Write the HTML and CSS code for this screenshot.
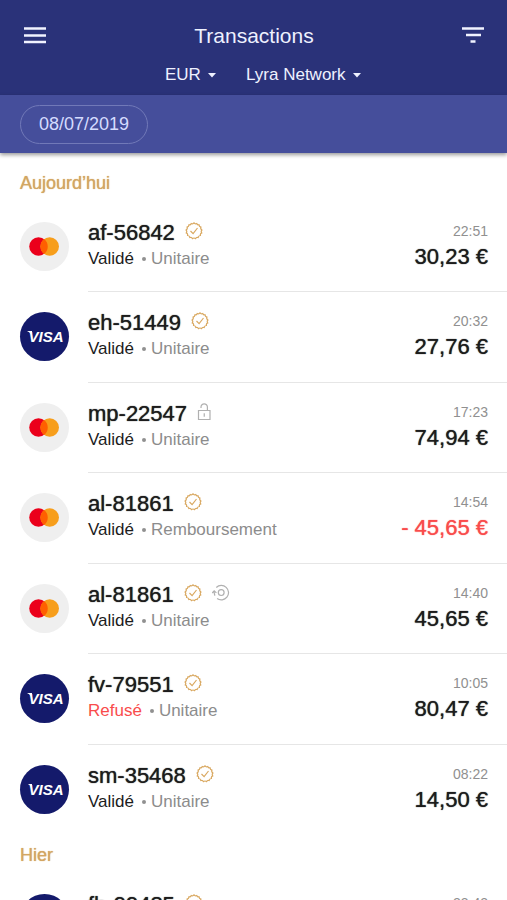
FILE: index.html
```
<!DOCTYPE html>
<html lang="fr">
<head>
<meta charset="utf-8">
<meta name="viewport" content="width=device-width, initial-scale=1">
<title>Transactions</title>
<link rel="stylesheet" href="styles.css">
</head>
<body>
<svg class="defs" aria-hidden="true">
  <symbol id="mastercard" viewBox="0 0 49 49">
    <circle cx="24.500" cy="24.500" r="24.500" fill="#efefef"/>
    <circle cx="18.500" cy="24.500" r="9.300" fill="#eb001b"/>
    <circle cx="29.700" cy="24.500" r="9.300" fill="#f79e1b"/>
    <path d="M24.100 17.100a9.300 9.300 0 0 1 0 14.800a9.300 9.300 0 0 1 0-14.800z" fill="#ff5f00"/>
  </symbol>
  <symbol id="seal" viewBox="0 0 18 18">
    <path d="M9 .9Q10 2.300 11.700 1.500Q12.300 3.200 14.100 2.900Q14.100 4.700 15.900 5.200Q15.200 6.900 16.900 8Q15.700 9.300 16.700 10.900Q15 11.600 15.400 13.500Q13.500 13.500 13.200 15.500Q11.500 14.800 10.400 16.600Q9 15.400 7.600 16.600Q6.500 14.800 4.800 15.500Q4.500 13.500 2.600 13.500Q3 11.600 1.300 10.900Q2.300 9.300 1.100 8Q2.800 6.900 2.100 5.200Q3.900 4.700 3.900 2.900Q5.700 3.200 6.300 1.500Q8 2.300 9 .9Z"/>
    <path d="M5.500 9l2.600 2.600 4.400-5.600"/>
  </symbol>
  <symbol id="lock" viewBox="0 0 18 18">
    <path d="M1.500 7.500h11.500v9h-11.500zM4 5V4a3.200 3.200 0 0 1 6.400 0v3.500M7.250 10.200v3.600"/>
  </symbol>
  <symbol id="refund" viewBox="0 0 18 18">
    <circle cx="9.200" cy="8.600" r="2.900"/>
    <path d="M4.300 3.500a7.200 7.200 0 1 1 .8 11M.2 9l2-2.200 2.200 2.100M2.200 7v1.700a7 7 0 0 0 .8 2.900"/>
  </symbol>
  <symbol id="caret" viewBox="0 0 8 5"><path d="M0 0h8L4 4.500z"/></symbol>
</svg>

<header class="app-bar">
  <div class="title-row">
    <button class="icon-button" type="button" aria-label="Menu">
      <svg viewBox="0 0 24 24"><path d="M1 4.500h22M1 11.500h22M1 18h22"/></svg>
    </button>
    <h1>Transactions</h1>
    <button class="icon-button" type="button" aria-label="Filtrer">
      <svg viewBox="0 0 24 24"><path d="M1 4.500h22M5 11h15M9.500 17.500h5"/></svg>
    </button>
  </div>
  <div class="select-row">
    <label class="picker">
      <select aria-label="Devise"><option>EUR</option></select>
      <svg class="caret"><use href="#caret"/></svg>
    </label>
    <label class="picker">
      <select aria-label="Société"><option>Lyra Network</option></select>
      <svg class="caret"><use href="#caret"/></svg>
    </label>
  </div>
</header>
<div class="date-bar">
  <button class="chip" type="button">08/07/2019</button>
</div>

<main>
  <h2>Aujourd’hui</h2>
  <ul class="list">
    <li>
      <svg class="brand" role="img" aria-label="Mastercard"><use href="#mastercard"/></svg>
      <div class="row">
        <div class="info">
          <div class="ref"><span>af-56842</span><svg class="badge"><use href="#seal"/></svg></div>
          <div class="meta"><span class="status">Validé</span><span class="kind">Unitaire</span></div>
        </div>
        <div class="figures"><time>22:51</time><span class="amount">30,23 €</span></div>
      </div>
    </li>
    <li>
      <span class="brand visa">VISA</span>
      <div class="row">
        <div class="info">
          <div class="ref"><span>eh-51449</span><svg class="badge"><use href="#seal"/></svg></div>
          <div class="meta"><span class="status">Validé</span><span class="kind">Unitaire</span></div>
        </div>
        <div class="figures"><time>20:32</time><span class="amount">27,76 €</span></div>
      </div>
    </li>
    <li>
      <svg class="brand" role="img" aria-label="Mastercard"><use href="#mastercard"/></svg>
      <div class="row">
        <div class="info">
          <div class="ref"><span>mp-22547</span><svg class="badge muted"><use href="#lock"/></svg></div>
          <div class="meta"><span class="status">Validé</span><span class="kind">Unitaire</span></div>
        </div>
        <div class="figures"><time>17:23</time><span class="amount">74,94 €</span></div>
      </div>
    </li>
    <li>
      <svg class="brand" role="img" aria-label="Mastercard"><use href="#mastercard"/></svg>
      <div class="row">
        <div class="info">
          <div class="ref"><span>al-81861</span><svg class="badge"><use href="#seal"/></svg></div>
          <div class="meta"><span class="status">Validé</span><span class="kind">Remboursement</span></div>
        </div>
        <div class="figures"><time>14:54</time><span class="amount negative">- 45,65 €</span></div>
      </div>
    </li>
    <li>
      <svg class="brand" role="img" aria-label="Mastercard"><use href="#mastercard"/></svg>
      <div class="row">
        <div class="info">
          <div class="ref"><span>al-81861</span><svg class="badge"><use href="#seal"/></svg><svg class="badge muted"><use href="#refund"/></svg></div>
          <div class="meta"><span class="status">Validé</span><span class="kind">Unitaire</span></div>
        </div>
        <div class="figures"><time>14:40</time><span class="amount">45,65 €</span></div>
      </div>
    </li>
    <li>
      <span class="brand visa">VISA</span>
      <div class="row">
        <div class="info">
          <div class="ref"><span>fv-79551</span><svg class="badge"><use href="#seal"/></svg></div>
          <div class="meta"><span class="status negative">Refusé</span><span class="kind">Unitaire</span></div>
        </div>
        <div class="figures"><time>10:05</time><span class="amount">80,47 €</span></div>
      </div>
    </li>
    <li>
      <span class="brand visa">VISA</span>
      <div class="row">
        <div class="info">
          <div class="ref"><span>sm-35468</span><svg class="badge"><use href="#seal"/></svg></div>
          <div class="meta"><span class="status">Validé</span><span class="kind">Unitaire</span></div>
        </div>
        <div class="figures"><time>08:22</time><span class="amount">14,50 €</span></div>
      </div>
    </li>
  </ul>
  <h2>Hier</h2>
  <ul class="list">
    <li>
      <span class="brand visa">VISA</span>
      <div class="row">
        <div class="info">
          <div class="ref"><span>fh-99485</span><svg class="badge"><use href="#seal"/></svg></div>
          <div class="meta"><span class="status">Validé</span><span class="kind">Unitaire</span></div>
        </div>
        <div class="figures"><time>23:42</time><span class="amount">20,00 €</span></div>
      </div>
    </li>
  </ul>
</main>
</body>
</html>
```
FILE: styles.css
```
* { box-sizing: border-box; }

body {
  margin: 0;
  background: #fff;
  color: #1c1c1c;
  font-family: "Liberation Sans", Arial, sans-serif;
  font-size: 17px;
}

h1, h2, ul { margin: 0; padding: 0; }
ul { list-style: none; }
svg { display: block; flex: none; }
.defs { position: absolute; width: 0; height: 0; }

button, select {
  font: inherit;
  color: inherit;
  background: none;
  border: 0;
  padding: 0;
  margin: 0;
}

.app-bar {
  background: #2a3279;
  color: #eef1ff;
  padding: 21px 22px 8px 23px;
}

.title-row {
  display: flex;
  align-items: center;
  justify-content: space-between;
}

h1 {
  font-size: 21px;
  font-weight: 400;
  line-height: 30px;
}

.icon-button svg {
  width: 24px;
  height: 24px;
  fill: none;
  stroke: #f1f3ff;
  stroke-width: 2.500;
}

.select-row {
  display: flex;
  justify-content: center;
  gap: 30px;
  padding: 12px 0 0 18px;
}

.picker {
  display: flex;
  align-items: center;
  gap: 7px;
}

.picker select {
  appearance: none;
  line-height: 24px;
}

.caret {
  width: 8px;
  height: 5px;
  fill: #eef1ff;
}

.date-bar {
  position: relative;
  padding: 10px 20px 9px;
  background: #454e9b;
  box-shadow: 0 2px 4px rgba(0, 0, 0, 0.4);
}

.chip {
  display: block;
  padding: 0 18px;
  border: 1px solid #7179b8;
  border-radius: 20px;
  color: #d5dcff;
  font-size: 18px;
  line-height: 37px;
}

main { padding-top: 10px; }

h2 {
  padding: 10px 20px 9px;
  color: #d3a662;
  font-size: 18px;
  font-weight: 400;
  line-height: 20px;
  text-shadow: 0 0 1px currentColor;
}

.list li {
  display: flex;
  align-items: center;
  gap: 19px;
  padding-left: 20px;
}

.brand {
  flex: none;
  width: 49px;
  height: 49px;
  margin-bottom: 2px;
}

.visa {
  position: relative;
  padding-left: 3px;
  border-radius: 50%;
  background: #141a6b;
  color: #fff;
  font-size: 15px;
  font-style: italic;
  font-weight: 700;
  line-height: 49px;
  text-align: center;
}

/* serif on the left arm of the V */
.visa::before {
  content: "";
  position: absolute;
  left: 7px;
  top: 19px;
  width: 5px;
  height: 4px;
  background: #fff;
  clip-path: polygon(0 0, 100% 0, 100% 100%, 50% 40%);
}

.row {
  flex: 1;
  display: flex;
  justify-content: space-between;
  padding: 17px 19px 20px 0;
  border-bottom: 1px solid #e6e6e6;
}

.list li:nth-child(even) .row { padding-bottom: 21px; }
.list li:last-child .row { border-color: transparent; }

.ref {
  display: flex;
  align-items: center;
  gap: 10px;
  font-size: 22px;
  line-height: 28px;
  text-shadow: 0 0 1px currentColor;
}

.badge {
  width: 18px;
  height: 18px;
  fill: none;
  stroke: #d9a860;
  stroke-width: 1.200;
  margin-bottom: 4px;
}

.badge.muted { stroke: #b0b0b0; }

.meta {
  display: flex;
  align-items: center;
  line-height: 24px;
}

.kind {
  display: flex;
  align-items: center;
  color: #8c8c8c;
}

.kind::before {
  content: "";
  width: 4px;
  height: 4px;
  margin: 0 5px 0 8px;
  border-radius: 50%;
  background: #909090;
}

.figures {
  display: flex;
  flex-direction: column;
  align-items: flex-end;
}

time {
  color: #909090;
  font-size: 14px;
  line-height: 24px;
}

.amount {
  font-size: 22px;
  line-height: 28px;
  text-shadow: 0 0 1px currentColor;
}

.negative { color: #f94c4c; }
```
